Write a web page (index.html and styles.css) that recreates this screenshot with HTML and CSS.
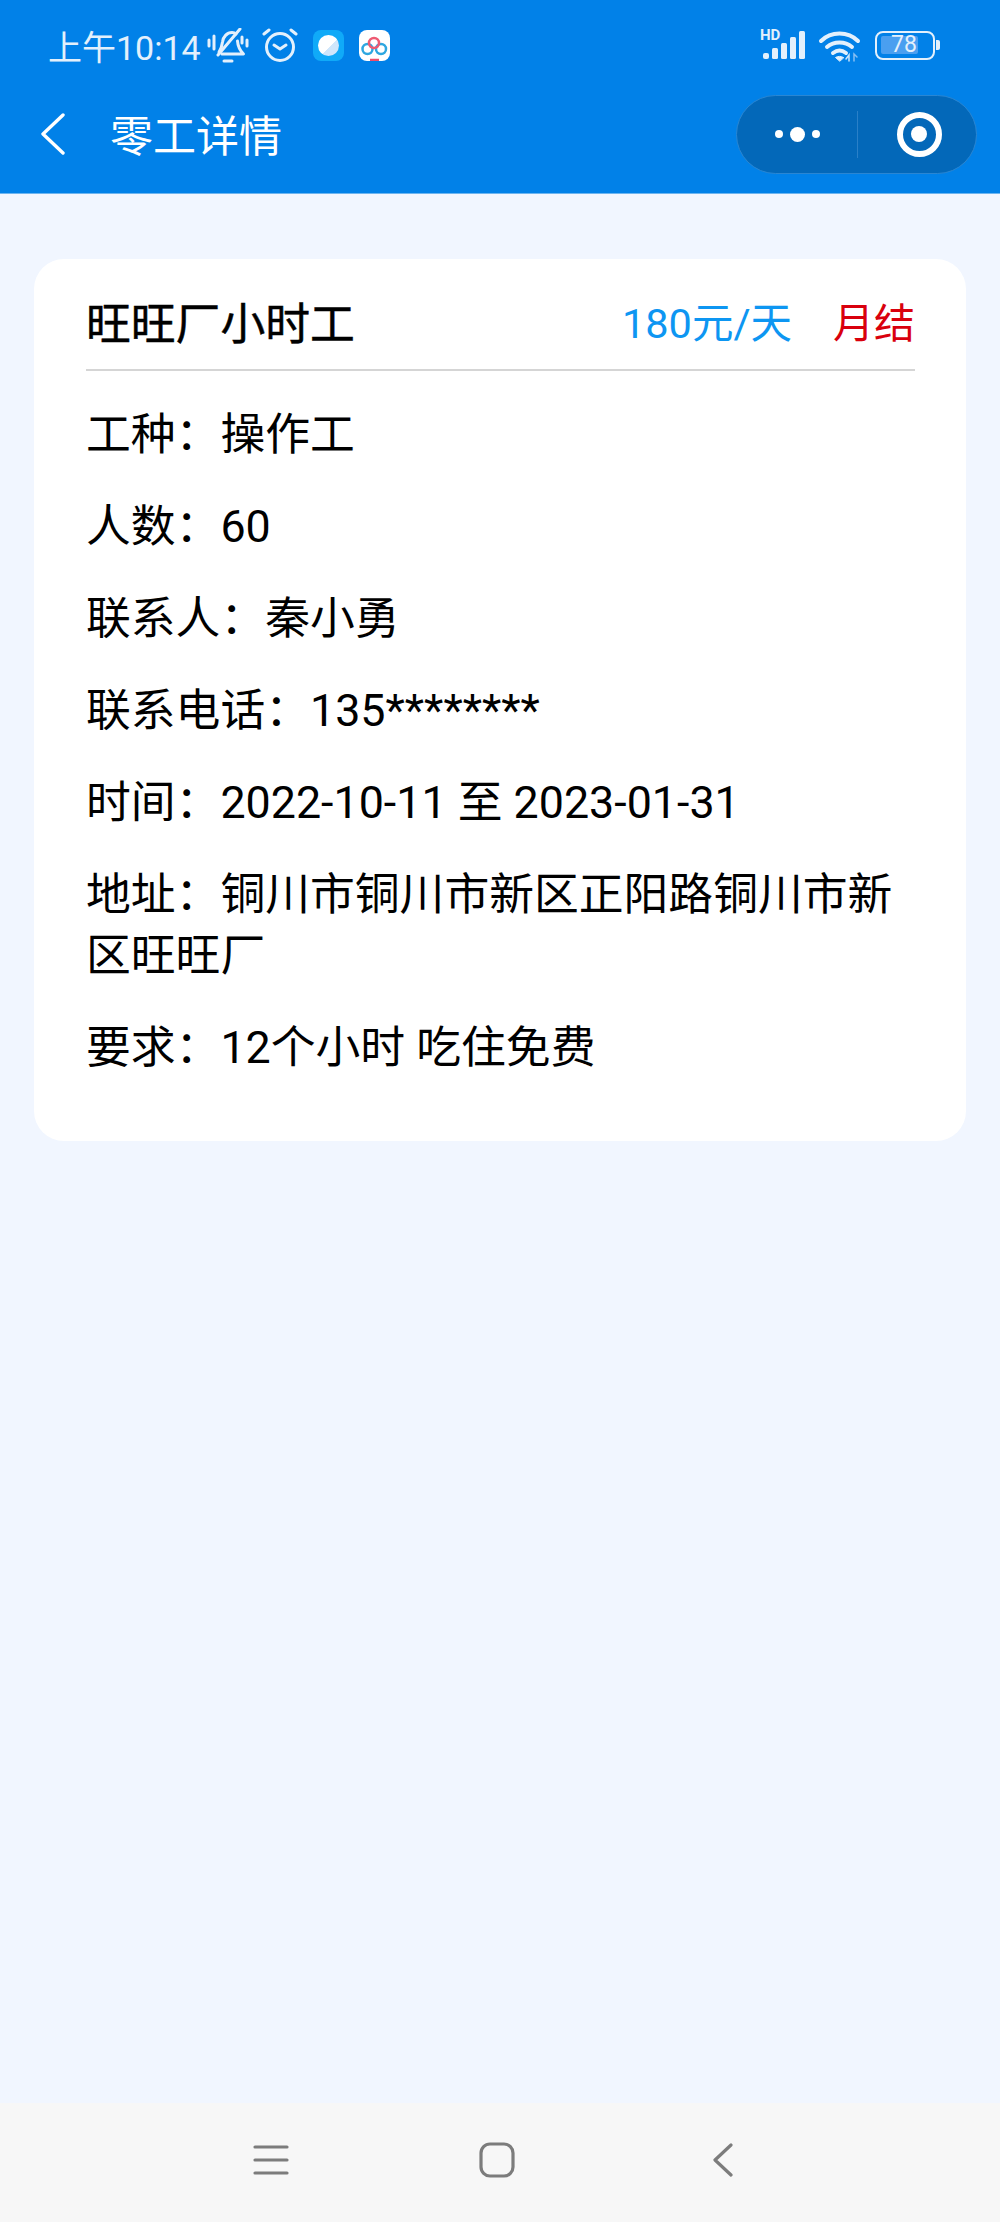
FILE: index.html
```html
<!DOCTYPE html>
<html lang="zh-CN">

<head>
    <meta charset="UTF-8">
    <meta name="viewport" content="width=device-width, initial-scale=1.0">
    <title>零工详情</title>
    <link rel="stylesheet" href="styles.css">
</head>

<body>
    <div class="phone">
        <header class="top-bar">
            <!-- Status bar -->
            <div class="status-bar">
                <div class="status-left">
                    <span class="clock">上午10:14</span>
                    <svg class="icon-bell" viewBox="0 0 42 35" fill="none" stroke="#e3f0fc" stroke-width="3" stroke-linecap="round" stroke-linejoin="round">
                        <path d="M12 24c2-3 3-6 3.500-10C16 9 20 4.500 25 4.500c1.500 0 3 .5 4 1.500"/>
                        <path d="M30.500 13c.3 5 2 9 6 13H15"/>
                        <path d="M11 27L33 1"/>
                        <path d="M17 33h8"/>
                        <path d="M2 12v6M7 8v13M40 12v6M35 9v6"/>
                    </svg>
                    <svg class="icon-alarm" viewBox="0 0 36 35" fill="none" stroke="#e3f0fc" stroke-width="3" stroke-linecap="round" stroke-linejoin="round">
                        <circle cx="18" cy="19" r="13.500"/>
                        <path d="M12 17l6 4 6-4"/>
                        <path d="M2 6l5-4M34 6l-5-4"/>
                    </svg>
                    <div class="app-icon app-blue"><span class="app-blue-dot"></span></div>
                    <div class="app-icon app-white">
                        <svg viewBox="0 0 31 31" fill="none" stroke-width="2.500">
                            <circle cx="8.500" cy="19" r="5" stroke="#2ea7e0"/>
                            <circle cx="22" cy="19" r="5" stroke="#2ea7e0"/>
                            <circle cx="15" cy="13" r="5" stroke="#ee5a72"/>
                            <path d="M11 30h9" stroke="#ee4d6a"/>
                        </svg>
                    </div>
                </div>
                <div class="status-right">
                    <div class="signal">
                        <span class="hd">HD</span>
                        <svg class="icon-signal" viewBox="0 0 46 30" fill="#e3f0fc">
                            <rect x="3" y="23" width="6" height="6" rx="2"/>
                            <rect x="12" y="18" width="6" height="11" rx="1.500"/>
                            <rect x="21" y="13" width="6" height="16" rx="1.500"/>
                            <rect x="30" y="7" width="6" height="22" rx="1.500"/>
                            <rect x="39" y="1" width="6" height="28" rx="1.500"/>
                        </svg>
                    </div>
                    <svg class="icon-wifi" viewBox="0 0 43 33" fill="none" stroke="#e3f0fc" stroke-width="4" stroke-linecap="round">
                        <path d="M3 12C13 2 30 2 40 12"/>
                        <path d="M9 18c7-6 18-6 25 0"/>
                        <path d="M15 24c4-3 9-3 13 0"/>
                        <path d="M21.500 32l-4-3.500c2.500-1.500 5.500-1.500 8 0z" fill="#e3f0fc" stroke-width="1"/>
                        <path d="M31 32v-6l-3 4" stroke="#cfe5fa" stroke-width="1.500"/>
                        <path d="M36 32v-7l3 3" stroke="#86bff2" stroke-width="1.500"/>
                    </svg>
                    <div class="battery">
                        <div class="battery-body">
                            <span class="battery-fill"></span>
                            <span class="battery-num">78</span>
                        </div>
                        <span class="battery-cap"></span>
                    </div>
                </div>
            </div>

            <!-- Nav bar -->
            <nav class="nav-bar">
                <svg class="nav-back" viewBox="0 0 24 42" fill="none" stroke="#fff" stroke-width="3.400" stroke-linecap="round" stroke-linejoin="round">
                    <path d="M22 2L2 21l20 19"/>
                </svg>
                <span class="nav-title">零工详情</span>
                <div class="capsule">
                    <div class="capsule-more">
                        <span class="dot"></span>
                        <span class="dot dot-big"></span>
                        <span class="dot"></span>
                    </div>
                    <span class="capsule-line"></span>
                    <div class="capsule-close"><span class="close-ring"></span></div>
                </div>
            </nav>
        </header>

        <main class="content">
            <section class="card">
                <div class="card-head">
                    <span class="job-name">旺旺厂小时工</span>
                    <span class="job-pay">180元/天</span>
                    <span class="job-settle">月结</span>
                </div>
                <div class="card-body">
                    <p>工种：操作工</p>
                    <p>人数：60</p>
                    <p>联系人：秦小勇</p>
                    <p>联系电话：135********</p>
                    <p>时间：2022-10-11 至 2023-01-31</p>
                    <p>地址：铜川市铜川市新区正阳路铜川市新区旺旺厂</p>
                    <p>要求：12个小时 吃住免费</p>
                </div>
            </section>
        </main>

        <!-- Android navigation keys -->
        <footer class="sys-nav">
            <svg class="sys-menu" viewBox="0 0 36 30" fill="none" stroke="#7c7c7c" stroke-width="3.200" stroke-linecap="round">
                <path d="M2 2h32M2 15h32M2 28h32"/>
            </svg>
            <svg class="sys-home" viewBox="0 0 36 36" fill="none" stroke="#7c7c7c" stroke-width="3.200">
                <rect x="2" y="2" width="32" height="32" rx="9"/>
            </svg>
            <svg class="sys-back" viewBox="0 0 20 34" fill="none" stroke="#7c7c7c" stroke-width="3.200" stroke-linecap="round" stroke-linejoin="round">
                <path d="M18 2L2 17l16 15"/>
            </svg>
        </footer>
    </div>
</body>

</html>
```

FILE: styles.css
```css
* {
    box-sizing: border-box;
}

body {
    margin: 0;
    padding: 0;
    font-family: "Roboto", "Noto Sans CJK SC", sans-serif;
    background-color: #f1f6ff;
}

.phone {
    display: flex;
    flex-direction: column;
    width: 1000px;
    height: 2222px;
    overflow: hidden;
}

.top-bar {
    height: 194px;
    flex-shrink: 0;
    background-color: #0181e8;
    border-bottom: 1px solid #6db5f0;
}

.status-bar {
    display: flex;
    justify-content: space-between;
    align-items: center;
    height: 90px;
    padding: 0 60px 0 48px;
}

.status-left {
    display: flex;
    align-items: center;
}

.clock {
    width: 159px;
    font-size: 34px;
    color: #e3f0fc;
    white-space: nowrap;
}

.icon-bell {
    width: 42px;
    height: 35px;
    margin-right: 13px;
}

.icon-alarm {
    width: 36px;
    height: 35px;
    margin-right: 15px;
}

.app-icon {
    width: 31px;
    height: 31px;
    border-radius: 8px;
}

.app-blue {
    display: flex;
    align-items: center;
    justify-content: center;
    margin-right: 15px;
    background-color: #10aaf8;
}

.app-blue-dot {
    width: 21px;
    height: 21px;
    border-radius: 50%;
    background: linear-gradient(135deg, #fff 55%, #cfe6fb 55%);
}

.app-white {
    background-color: #fff;
}

.app-white svg {
    display: block;
    width: 31px;
    height: 31px;
}

.status-right {
    display: flex;
    align-items: center;
}

.signal {
    position: relative;
    width: 46px;
    height: 30px;
    margin-right: 12px;
}

.hd {
    position: absolute;
    left: 0;
    top: -2px;
    font-size: 15px;
    line-height: 15px;
    font-weight: 700;
    color: #e3f0fc;
}

.icon-signal {
    display: block;
    width: 46px;
    height: 30px;
}

.icon-wifi {
    width: 43px;
    height: 33px;
    margin-right: 14px;
}

.battery {
    display: flex;
    align-items: center;
}

.battery-body {
    position: relative;
    width: 60px;
    height: 29px;
    border: 2.500px solid #e3f0fc;
    border-radius: 8px;
    padding: 3px 4px;
}

.battery-fill {
    display: block;
    width: 37px;
    height: 18px;
    border-radius: 2px;
    background-color: #4a9ff0;
}

.battery-num {
    position: absolute;
    left: 14px;
    top: 0;
    font-size: 23px;
    line-height: 24px;
    color: #e3f0fc;
}

.battery-cap {
    width: 4px;
    height: 10px;
    margin-left: 1px;
    border-radius: 0 2px 2px 0;
    background-color: #e3f0fc;
}

.nav-bar {
    display: flex;
    align-items: center;
    height: 88px;
    padding: 0 23px 0 41px;
}

.nav-back {
    width: 24px;
    height: 42px;
    margin-right: 45px;
}

.nav-title {
    flex: 1;
    margin-bottom: 3px;
    font-size: 43px;
    color: #fff;
}

.capsule {
    display: flex;
    align-items: center;
    width: 241px;
    height: 79px;
    background-color: #0368b9;
    border: 1px solid #2a86d2;
    border-radius: 40px;
}

.capsule-more {
    display: flex;
    align-items: center;
    justify-content: center;
    gap: 7px;
    width: 120px;
}

.dot {
    width: 8px;
    height: 8px;
    border-radius: 50%;
    background-color: #fff;
}

.dot-big {
    width: 15px;
    height: 15px;
}

.capsule-line {
    width: 1px;
    height: 47px;
    background-color: #2a80c8;
}

.capsule-close {
    display: flex;
    flex: 1;
    align-items: center;
    justify-content: center;
    padding-left: 4px;
}

.close-ring {
    display: flex;
    align-items: center;
    justify-content: center;
    width: 45px;
    height: 45px;
    border: 6px solid #fff;
    border-radius: 50%;
}

.close-ring::after {
    content: "";
    width: 16px;
    height: 16px;
    border-radius: 50%;
    background-color: #fff;
}

.content {
    flex: 1;
    padding: 65px 34px 0;
}

.card {
    height: 882px;
    padding: 0 51px 0 52px;
    background-color: #fff;
    border-radius: 30px;
}

.card-head {
    display: flex;
    align-items: center;
    height: 112px;
    padding-top: 12px;
    border-bottom: 2px solid #d5d5d5;
}

.job-name {
    flex: 1;
    font-size: 44.800px;
    -webkit-text-stroke: 0.5px #000;
    color: #000;
}

.job-pay {
    font-size: 41.500px;
    color: #0d96f2;
    margin-right: 41px;
}

.job-settle {
    font-size: 41px;
    color: #d9000d;
}

.card-body {
    padding-top: 2px;
}

.card-body p {
    margin: 0;
    padding-top: 31px;
    font-size: 44.800px;
    line-height: 61px;
    color: #000;
}

.sys-nav {
    display: flex;
    align-items: center;
    height: 119px;
    flex-shrink: 0;
    padding: 0 0 5px 253px;
    background-color: #f7f7f7;
}

.sys-menu {
    width: 36px;
    height: 30px;
    margin-right: 190px;
}

.sys-home {
    width: 36px;
    height: 36px;
    margin-right: 198px;
}

.sys-back {
    width: 20px;
    height: 34px;
}
```
